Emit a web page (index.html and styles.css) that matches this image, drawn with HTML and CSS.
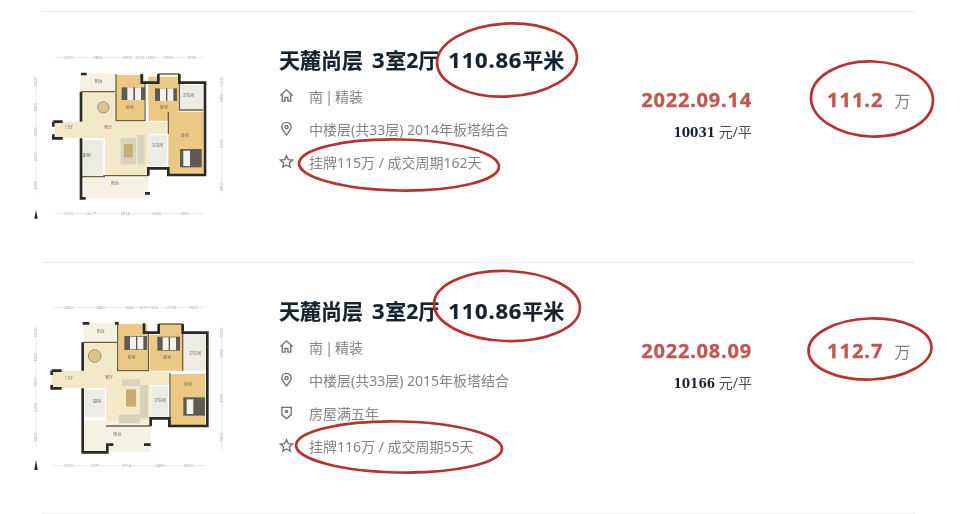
FILE: index.html
```html
<!DOCTYPE html>
<html lang="zh-CN">
<head>
    <meta charset="UTF-8">
    <meta name="viewport" content="width=device-width, initial-scale=1.0">
    <title>天麓尚层 成交记录</title>
    <link rel="stylesheet" href="styles.css">
</head>
<body>
    <div class="list">
        <div class="rule"></div>
        <div class="deal">
            <svg class="plan" viewBox="0 0 660 600">
                <g class="dims">
                    <path d="M105 82H550M105 550H550M48 140V490M606 140V490"/>
                </g>
                <g class="dim-text">
                    <text x="145" y="86">2370</text><text x="235" y="86">2800</text><text x="322" y="86">3300</text>
                    <text x="375" y="86">1075 1500</text><text x="445" y="86">2700</text><text x="515" y="86">1900</text>
                    <text x="145" y="554">2100</text><text x="215" y="554">3277</text><text x="315" y="554">3914</text>
                    <text x="410" y="554">2400</text><text x="495" y="554">3000</text>
                    <text transform="translate(52 155) rotate(-90)">1200</text><text transform="translate(52 232) rotate(-90)">1800</text>
                    <text transform="translate(52 305) rotate(-90)">1500</text><text transform="translate(52 380) rotate(-90)">2400</text>
                    <text transform="translate(52 466) rotate(-90)">1800</text><text transform="translate(610 155) rotate(-90)">1200</text>
                    <text transform="translate(610 205) rotate(-90)">1800</text><text transform="translate(610 340) rotate(-90)">3900</text>
                    <text transform="translate(610 470) rotate(-90)">1800</text>
                </g>
                <path class="floor-pale" d="M180 130H285V185H180Z"/>
                <path class="floor-hall" d="M183 185H285V275H440V312H385V437H255V325H183ZM105 275H183V325H105Z"/>
                <path class="floor-room" d="M288 135H372V272H288ZM385 140H475V272H385Z"/>
                <path class="floor-room" d="M445 245H550V435H445Z"/>
                <path class="floor-wet" d="M480 165H550V240H480ZM385 315H440V407H385ZM185 330H250V437H185Z"/>
                <path class="floor-pale" d="M185 440H385V505H185Z"/>
                <g class="bed">
                    <rect x="305" y="172" width="70" height="38"/><rect x="322" y="172" width="18" height="38" class="sheet"/><rect x="345" y="172" width="18" height="38" class="sheet"/>
                    <rect x="405" y="175" width="66" height="38"/><rect x="420" y="175" width="18" height="38" class="sheet"/><rect x="442" y="175" width="18" height="38" class="sheet"/>
                    <rect x="480" y="357" width="65" height="55"/><rect x="490" y="362" width="20" height="46" class="sheet"/>
                </g>
                <rect class="sofa" x="302" y="325" width="46" height="78"/>
                <rect class="rug" x="312" y="342" width="26" height="40"/>
                <rect class="sofa" x="352" y="315" width="22" height="88"/>
                <circle class="table" cx="250" cy="232" r="17"/>
                <g class="soft-walls">
                    <path d="M288 132V272H375V158M415 132H478M478 158V240H550M445 245V312M250 437H385M185 185H285M185 440H255"/>
                </g>
                <g class="walls">
                    <path d="M183 132H200M183 185V275M100 275H128M100 275V290M100 313V325H128M183 325V505H197M375 490H390"/>
                    <path d="M365 132V158H415V132M478 132V158H555V435H445V415H385V437"/>
                </g>
                <g class="room-text">
                    <text x="236" y="160">阳台</text><text x="330" y="238">卧室</text><text x="432" y="238">卧室</text><text x="495" y="322">卧室</text>
                    <text x="505" y="200">卫生间</text><text x="265" y="298">客厅</text><text x="412" y="352">卫生间</text><text x="200" y="380">厨房</text><text x="285" y="466">阳台</text><text x="147" y="298">门厅</text>
                </g>
                <path class="north" d="M48 540L53 566H43Z"/>
            </svg>
            <div class="info">
                <h2 class="title">天麓尚层 <span class="num">3</span>室2厅 <span class="num">110.86</span>平米</h2>
                <div class="line">
                    <svg class="icon" viewBox="0 0 16 16"><path d="M1.5 8L8 2l6.500 6M3.500 7v7h3v-4h3v4h3V7"/></svg>
                    <span class="tight">南 | 精装</span>
                </div>
                <div class="line">
                    <svg class="icon" viewBox="0 0 16 16"><path d="M8 15C5 11 3 9 3 6.500a5 5 0 0 1 10 0C13 9 11 11 8 15Z"/><circle cx="8" cy="6.500" r="1.700"/></svg>
                    <span>中楼层(共33层) 2014年板塔结合</span>
                </div>
                <div class="line">
                    <svg class="icon" viewBox="0 0 16 16"><path d="M8 1.800l1.900 4.200 4.500.5-3.400 3 1 4.500L8 11.700 4 14l1-4.500-3.400-3 4.500-.5Z"/></svg>
                    <span>挂牌115万 / 成交周期162天</span>
                </div>
            </div>
            <div class="meta">
                <div class="date">2022.09.14</div>
                <div class="unit"><b>10031</b> 元/平</div>
            </div>
            <div class="price"><b>111.2</b> <span>万</span></div>
        </div>

        <div class="rule"></div>
        <div class="deal">
            <svg class="plan" viewBox="0 -57 660 600">
                <g class="dims">
                    <path d="M100 22H555M100 497H555M48 75V440M606 80V450"/>
                </g>
                <g class="dim-text">
                    <text x="145" y="26">2400</text><text x="240" y="26">2800</text><text x="330" y="26">3300</text>
                    <text x="385" y="26">1075 1500</text><text x="455" y="26">2700</text><text x="520" y="26">1900</text>
                    <text x="145" y="501">2100</text><text x="225" y="501">3277</text><text x="320" y="501">3914</text>
                    <text x="420" y="501">2400</text><text x="505" y="501">3000</text>
                    <text transform="translate(52 98) rotate(-90)">1200</text><text transform="translate(52 172) rotate(-90)">1800</text>
                    <text transform="translate(52 245) rotate(-90)">1500</text><text transform="translate(52 322) rotate(-90)">2400</text>
                    <text transform="translate(52 410) rotate(-90)">1800</text><text transform="translate(610 98) rotate(-90)">1200</text>
                    <text transform="translate(610 160) rotate(-90)">1800</text><text transform="translate(610 295) rotate(-90)">3900</text>
                    <text transform="translate(610 410) rotate(-90)">1800</text>
                </g>
                <path class="floor-pale" d="M190 70H293V127H190Z"/>
                <path class="floor-hall" d="M190 127H293V215H450V255H390V378H258V265H190ZM95 212H190V265H95Z"/>
                <path class="floor-room" d="M296 72H382V212H296ZM388 105H418V72H486V212H388Z"/>
                <path class="floor-room" d="M452 222H556V376H452Z"/>
                <path class="floor-wet" d="M490 102H558V212H490ZM392 258H445V350H392ZM195 268H255V352H195Z"/>
                <path class="floor-pale" d="M190 362H392V455H190Z"/>
                <g class="bed">
                    <rect x="313" y="108" width="68" height="42"/><rect x="330" y="110" width="18" height="38" class="sheet"/><rect x="352" y="110" width="18" height="38" class="sheet"/>
                    <rect x="412" y="110" width="68" height="42"/><rect x="428" y="112" width="18" height="38" class="sheet"/><rect x="450" y="112" width="18" height="38" class="sheet"/>
                    <rect x="490" y="292" width="65" height="55"/><rect x="500" y="298" width="20" height="44" class="sheet"/>
                </g>
                <rect class="sofa" x="305" y="238" width="55" height="20"/>
                <rect class="rug" x="318" y="268" width="30" height="52"/>
                <rect class="sofa" x="296" y="344" width="64" height="26"/>
                <rect class="sofa" x="360" y="255" width="24" height="100"/>
                <circle class="table" cx="224" cy="168" r="19"/>
                <g class="soft-walls">
                    <path d="M293 70V212H385V98M416 72H488M488 98V212M450 220V378M258 378H392M190 127H293"/>
                </g>
                <g class="walls">
                    <path d="M188 70H208M188 127V212M95 212H125M95 212V225M95 255V265H125M188 265V457H262V434H280M372 434H392"/>
                    <path d="M285 70H296M372 70V98H416V72M488 72V98H562V378H448V355H392V378"/>
                </g>
                <g class="room-text">
                    <text x="242" y="100">阳台</text><text x="335" y="176">卧室</text><text x="442" y="176">卧室</text><text x="505" y="258">卧室</text>
                    <text x="525" y="165">卫生间</text><text x="268" y="238">客厅</text><text x="420" y="305">卫生间</text><text x="232" y="310">厨房</text><text x="292" y="408">阳台</text><text x="147" y="240">门厅</text>
                </g>
                <path class="north" d="M48 480L53 510H43Z"/>
            </svg>
            <div class="info">
                <h2 class="title">天麓尚层 <span class="num">3</span>室2厅 <span class="num">110.86</span>平米</h2>
                <div class="line">
                    <svg class="icon" viewBox="0 0 16 16"><path d="M1.5 8L8 2l6.500 6M3.500 7v7h3v-4h3v4h3V7"/></svg>
                    <span class="tight">南 | 精装</span>
                </div>
                <div class="line">
                    <svg class="icon" viewBox="0 0 16 16"><path d="M8 15C5 11 3 9 3 6.500a5 5 0 0 1 10 0C13 9 11 11 8 15Z"/><circle cx="8" cy="6.500" r="1.700"/></svg>
                    <span>中楼层(共33层) 2015年板塔结合</span>
                </div>
                <div class="line">
                    <svg class="icon" viewBox="0 0 16 16"><path d="M3 2.500h10v8L8 14.500l-5-4Z"/><circle cx="8" cy="7" r="1.200"/></svg>
                    <span>房屋满五年</span>
                </div>
                <div class="line">
                    <svg class="icon" viewBox="0 0 16 16"><path d="M8 1.800l1.900 4.200 4.500.5-3.400 3 1 4.500L8 11.700 4 14l1-4.500-3.400-3 4.500-.5Z"/></svg>
                    <span>挂牌116万 / 成交周期55天</span>
                </div>
            </div>
            <div class="meta">
                <div class="date">2022.08.09</div>
                <div class="unit"><b>10166</b> 元/平</div>
            </div>
            <div class="price"><b>112.7</b> <span>万</span></div>
        </div>
        <div class="rule"></div>
    </div>

    <!-- hand drawn red circles on top of the page -->
    <svg class="marks" viewBox="0 0 960 514">
        <ellipse cx="507" cy="60" rx="70" ry="36.500" transform="rotate(-3 507 60)"/>
        <ellipse cx="399" cy="165" rx="100" ry="25.500" transform="rotate(1 399 165)"/>
        <ellipse cx="872" cy="99" rx="61" ry="37.500" transform="rotate(2 872 99)"/>
        <ellipse cx="507" cy="306" rx="73" ry="35" transform="rotate(2 507 306)"/>
        <ellipse cx="399" cy="447" rx="103" ry="25.500" transform="rotate(1 399 447)"/>
        <ellipse cx="870" cy="349" rx="61.500" ry="30.500" transform="rotate(-2 870 349)"/>
    </svg>
</body>
</html>
```

FILE: styles.css
```css
* {
    margin: 0;
    padding: 0;
    box-sizing: border-box;
}

body {
    position: relative;
    height: 514px;
    overflow: hidden;
    background: #fff;
    font-family: "Noto Sans", "Noto Sans CJK SC", sans-serif;
}

.list {
    padding: 11px 0 0 20px;
    filter: blur(0.45px);
}

.rule {
    height: 1px;
    width: 873px;
    margin-left: 22px;
    background: #eceded;
}

.deal {
    display: flex;
    height: 250px;
}

.plan {
    flex: 0 0 220px;
    width: 220px;
    height: 200px;
    margin-top: 18px;
    filter: blur(0.6px);
}

.dims path {
    fill: none;
    stroke: #d2d2d2;
    stroke-width: 1.5;
}

.dim-text text {
    font-size: 12px;
    fill: #a3a3a3;
    text-anchor: middle;
    paint-order: stroke;
    stroke: #fff;
    stroke-width: 3px;
}

.room-text text {
    font-size: 12px;
    fill: #6e6a58;
    text-anchor: middle;
}

.floor-pale { fill: #f5f2e3; }
.floor-hall { fill: #f3e9c9; }
.floor-room { fill: #ebc884; }
.floor-wet { fill: #ecebe4; }

.bed rect { fill: #5d5b52; }
.bed .sheet { fill: #f3f1ea; }
.sofa { fill: #d8d3bd; }
.rug { fill: #c9ab72; }
.table { fill: #d9c391; stroke: #a09478; stroke-width: 3; }

.soft-walls path {
    fill: none;
    stroke: #6d6038;
    stroke-width: 4;
}

.walls path {
    fill: none;
    stroke: #2a2a28;
    stroke-width: 8;
}

.north { fill: #222; }

.info {
    flex: 0 0 341px;
    margin-left: 39px;
    padding-top: 32px;
}

.title {
    height: 30px;
    margin-bottom: 5px;
    font-size: 21px;
    line-height: 30px;
    font-weight: 700;
    word-spacing: 3.500px;
    color: #17222f;
    white-space: nowrap;
    -webkit-text-stroke: 0.2px #17222f;
}

.num {
    font-size: 22px;
    letter-spacing: 0.800px;
}

.line {
    display: flex;
    align-items: center;
    gap: 15px;
    height: 33px;
    font-size: 14px;
    color: #858585;
}

.tight {
    word-spacing: -1.500px;
}

.icon {
    flex: 0 0 15px;
    width: 15px;
    height: 15px;
    fill: none;
    stroke: #6f6f6f;
    stroke-width: 1.4;
}

.meta {
    flex: 0 0 132px;
    padding-top: 73px;
    text-align: right;
}

.date {
    height: 30px;
    font-size: 20px;
    line-height: 30px;
    font-weight: 700;
    letter-spacing: 0.800px;
    color: #c25750;
    -webkit-text-stroke: 0.3px #c25750;
}

.unit {
    margin-top: 2px;
    height: 30px;
    font-size: 14px;
    line-height: 30px;
    color: #4c4c4c;
}

.unit b {
    font-family: "DejaVu Serif", serif;
    font-size: 12px;
    color: #17222f;
}

.price {
    margin-left: 75px;
    padding-top: 73px;
    line-height: 30px;
    white-space: nowrap;
}

.price b {
    font-size: 20px;
    letter-spacing: 1px;
    color: #c25750;
    -webkit-text-stroke: 0.3px #c25750;
}

.price span {
    margin-left: 7px;
    font-size: 16px;
    color: #8a8080;
}

.marks {
    position: absolute;
    top: 0;
    left: 0;
    width: 960px;
    height: 514px;
    pointer-events: none;
    filter: blur(0.4px);
}

.marks ellipse {
    fill: none;
    stroke: #b7342e;
    stroke-width: 2.7;
}
```
